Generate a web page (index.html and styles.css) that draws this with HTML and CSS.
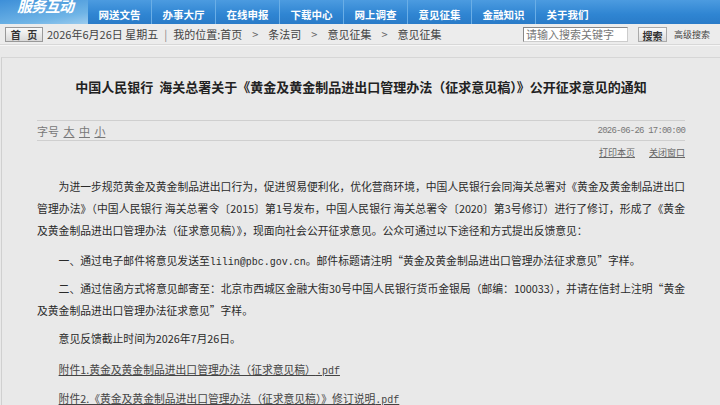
FILE: index.html
```html
<!DOCTYPE html>
<html lang="zh-CN">
<head>
    <meta charset="UTF-8">
    <title>意见征集</title>
    <link rel="stylesheet" href="styles.css">
</head>
<body>
    <div class="topnav">
        <div class="logo">服务互动</div>
        <ul class="menu">
            <li>网送文告</li>
            <li>办事大厅</li>
            <li>在线申报</li>
            <li>下载中心</li>
            <li>网上调查</li>
            <li>意见征集</li>
            <li>金融知识</li>
            <li class="last">关于我们</li>
        </ul>
    </div>

    <div class="crumbbar">
        <span class="homebtn">首 页</span>
        <span class="crumbs">
            <span>2026年6月26日 星期五</span>
            <span class="bar">|</span>
            <span>我的位置:首页</span>
            <span class="arrow">&gt;</span>
            <span>条法司</span>
            <span class="arrow">&gt;</span>
            <span>意见征集</span>
            <span class="arrow">&gt;</span>
            <span>意见征集</span>
        </span>
        <form class="search">
            <input type="text" placeholder="请输入搜索关键字">
            <button type="button">搜索</button>
            <a href="#">高级搜索</a>
        </form>
    </div>

    <div class="page">
        <div class="article">
            <h1>中国人民银行&nbsp;&nbsp;海关总署关于《黄金及黄金制品进出口管理办法（征求意见稿）》公开征求意见的通知</h1>

            <div class="meta">
                <span class="fontsize">字号 <a href="#">大</a> <a href="#">中</a> <a href="#">小</a></span>
                <span class="date">2026-06-26 17:00:00</span>
            </div>

            <div class="tools">
                <a href="#">打印本页</a>
                <a href="#">关闭窗口</a>
            </div>

            <div class="content">
                <p class="lead">为进一步规范黄金及黄金制品进出口行为，促进贸易便利化，优化营商环境，中国人民银行会同海关总署对《黄金及黄金制品进出口管理办法》（中国人民银行 海关总署令〔2015〕第1号发布，中国人民银行 海关总署令〔2020〕第3号修订）进行了修订，形成了《黄金及黄金制品进出口管理办法（征求意见稿）》，现面向社会公开征求意见。公众可通过以下途径和方式提出反馈意见：</p>
                <p>一、通过电子邮件将意见发送至<span class="mono">lilin@pbc.gov.cn</span>。邮件标题请注明“黄金及黄金制品进出口管理办法征求意见”字样。</p>
                <p>二、通过信函方式将意见邮寄至：北京市西城区金融大街30号中国人民银行货币金银局（邮编：100033），并请在信封上注明“黄金及黄金制品进出口管理办法征求意见”字样。</p>
                <p class="deadline">意见反馈截止时间为2026年7月26日。</p>
                <p class="attach"><a href="#">附件1.黄金及黄金制品进出口管理办法（征求意见稿）<span class="mono">.pdf</span></a></p>
                <p class="attach"><a href="#">附件2.《黄金及黄金制品进出口管理办法（征求意见稿）》修订说明<span class="mono">.pdf</span></a></p>
            </div>
        </div>
    </div>
</body>
</html>
```

FILE: styles.css
```css
body {
    margin: 0;
    background-color: #e9e9e9;
    font-family: "Noto Sans CJK SC", "Noto Sans", sans-serif;
    color: #333;
    font-size: 11px;
}
a {
    color: #333;
}

/* top menu */
.topnav {
    display: flex;
    height: 24px;
    background: linear-gradient(#4c9be0, #2f85d2 60%, #2a7bc8);
    overflow: hidden;
}
.logo {
    width: 88px;
    background: linear-gradient(170deg, #3d8fd8, #6fb4e6 70%, #9bcbee);
    color: #fff;
    font-family: "Liberation Serif", "Noto Sans CJK SC", serif;
    font-style: italic;
    font-weight: bold;
    font-size: 15px;
    line-height: 14px;
    padding-left: 17px;
    box-sizing: border-box;
    letter-spacing: -1px;
}
.menu {
    display: flex;
    margin: 0;
    padding: 0;
    list-style: none;
}
.menu li {
    width: 63px;
    text-align: center;
    color: #fff;
    font-weight: bold;
    font-size: 10.5px;
    line-height: 14px;
    padding-top: 8px;
    border-right: 1px solid #6aaee6;
}
.menu li.last {
    border-right: none;
}

/* breadcrumb bar */
.crumbbar {
    display: flex;
    align-items: center;
    height: 20px;
    padding: 0 10px 0 5px;
    background-color: #ececec;
    border-bottom: 1px solid #d8d8d8;
    box-shadow: 0 1px 0 #f6f6f6;
}
.homebtn {
    width: 36px;
    height: 13px;
    line-height: 13px;
    text-align: center;
    font-weight: bold;
    font-size: 10px;
    color: #333;
    border: 1px solid #999;
    background: linear-gradient(#fafafa, #d9d9d9);
    margin-right: 4px;
    word-spacing: 4px;
}
.crumbs {
    display: flex;
    gap: 6px;
    color: #444;
}
.crumbs .arrow {
    margin: 0 4px;
    color: #666;
}
.crumbs .bar {
    color: #888;
}
.search {
    margin-left: auto;
    display: flex;
    align-items: center;
}
.search input {
    width: 105px;
    height: 15px;
    box-sizing: border-box;
    border: 1px solid #888;
    border-right-color: #ccc;
    border-bottom-color: #ccc;
    padding: 0 2px;
    font-family: "Noto Sans CJK SC", sans-serif;
    font-size: 11px;
    background-color: #fff;
}
.search input::placeholder {
    color: #777;
}
.search button {
    margin-left: 10px;
    width: 29px;
    height: 15px;
    padding: 0;
    border: 1px solid #aaa;
    background: linear-gradient(#fafafa, #dcdcdc);
    font-family: "Noto Sans CJK SC", sans-serif;
    font-size: 10px;
    font-weight: bold;
    color: #333;
}
.search a {
    margin-left: 7px;
    text-decoration: none;
    color: #444;
    font-size: 9px;
}

/* article */
.page {
    margin-top: 12px;
    border-top: 1px solid #d6d6d6;
    border-left: 1px solid #d0d0d0;
    margin-left: 1px;
}
.article {
    width: 648px;
    padding: 20px 0 0 35px;
}
h1 {
    margin: 0 0 24px;
    text-align: center;
    font-size: 13px;
    line-height: 18px;
    color: #222;
}
.meta {
    display: flex;
    justify-content: space-between;
    align-items: center;
    height: 19px;
    border-top: 1px solid #cfcfcf;
    border-bottom: 1px solid #cfcfcf;
    color: #777;
}
.meta a {
    color: #777;
    margin-left: 2px;
}
.date {
    font-family: "Liberation Mono", monospace;
    font-size: 9px;
    letter-spacing: -0.8px;
    color: #777;
}
.tools {
    display: flex;
    justify-content: flex-end;
    gap: 14px;
    margin-top: 5px;
    font-size: 9px;
    line-height: 14px;
}
.tools a {
    color: #666;
}
.content {
    margin-top: 15px;
    font-size: 10.8px;
    line-height: 22px;
    text-align: justify;
    color: #2a2a2a;
}
.content p {
    margin: 0 0 6px;
    text-indent: 2em;
}
.content p.lead {
    margin-bottom: 8px;
}
.content p.deadline {
    margin-bottom: 9px;
}
.content p.attach {
    margin-bottom: 7px;
}
.content a {
    color: #444;
}
.mono {
    font-family: "Liberation Mono", monospace;
    font-size: 10px;
    line-height: 10px;
}
```
